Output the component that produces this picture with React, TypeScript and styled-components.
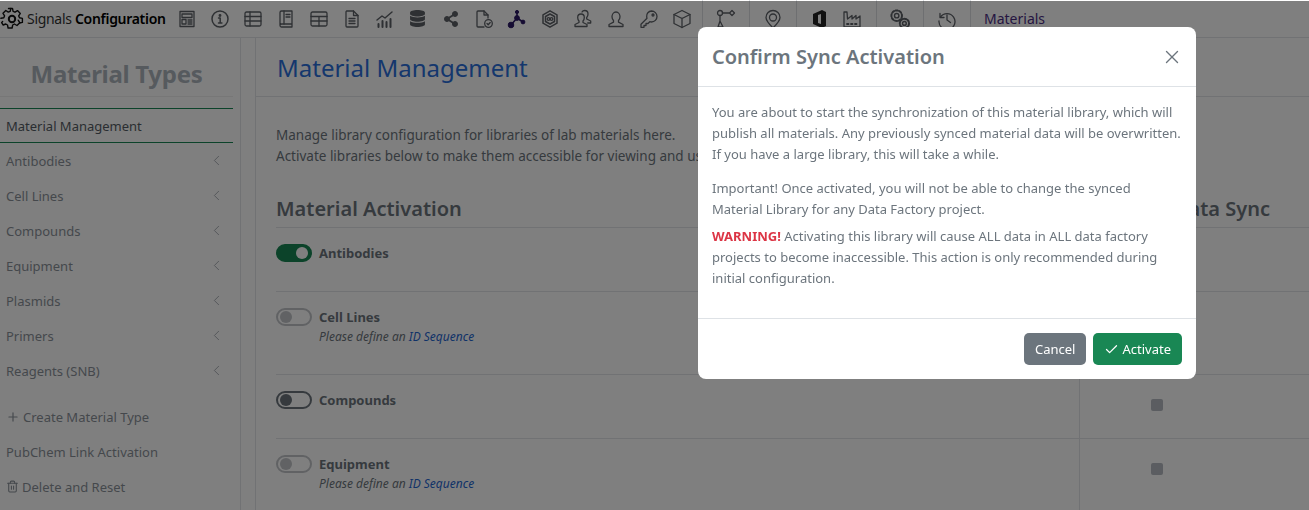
import { createGlobalStyle } from "styled-components";
import styled from "styled-components";
import { ReactNode } from "react";
import { FiChevronLeft, FiPlus, FiTrash2, FiCheck, FiX } from "react-icons/fi";
import { FaDatabase, FaShareAlt } from "react-icons/fa";

const GlobalStyle = createGlobalStyle`
  html, body {
    margin: 0;
    height: 510px;
    overflow: hidden;
    background: #fff;
    font-family: "Noto Sans", "Open Sans", sans-serif;
  }
  * { box-sizing: border-box; }
`;

const Page = styled.div`
  width: 1309px;
  height: 510px;
  display: flex;
  flex-direction: column;
  overflow: hidden;
`;

const TopBar = styled.div`
  height: 38px;
  flex: none;
  display: flex;
  align-items: center;
  border-bottom: 1px solid #e3e5e8;
`;

const Brand = styled.div`
  width: 170px;
  flex: none;
  display: flex;
  align-items: center;
  gap: 3px;
  font-size: 14px;
  letter-spacing: -0.3px;
  color: #333;
  b {
    color: #000;
    font-weight: 600;
  }
`;

const IconSlot = styled.div<{ $w?: number }>`
  width: ${(p) => p.$w ?? 33}px;
  flex: none;
  height: 24px;
  display: flex;
  align-items: center;
  justify-content: center;
  color: #5d6167;
`;

const Group = styled.div`
  height: 38px;
  flex: none;
  display: flex;
  align-items: center;
  justify-content: center;
  padding: 0 8px;
  border-left: 1px solid #dcdfe3;
`;

const BarLabel = styled.div`
  padding-left: 13px;
  height: 38px;
  display: flex;
  align-items: center;
  border-left: 1px solid #dcdfe3;
  font-size: 14px;
  color: #4b2d83;
`;

const Body = styled.div`
  flex: 1;
  display: flex;
  min-height: 0;
`;

const Sidebar = styled.aside`
  width: 241px;
  flex: none;
  border-right: 1px solid #e3e5e8;
  color: #6c757d;
`;

const SideTitle = styled.h2`
  margin: 0 7px 11px 0;
  height: 59px;
  line-height: 71px;
  text-align: center;
  font-size: 24px;
  font-weight: 700;
  color: #adb5bd;
  letter-spacing: -0.3px;
  border-bottom: 1px solid #eee;
`;

const SideActive = styled.div`
  width: 233px;
  height: 35px;
  padding-left: 6px;
  display: flex;
  align-items: center;
  font-size: 13px;
  color: #555c64;
  border-top: 1px solid #198754;
  border-bottom: 1px solid #198754;
`;

const SideItem = styled.div`
  width: 233px;
  height: 35px;
  padding: 0 8px 0 6px;
  display: flex;
  align-items: center;
  justify-content: space-between;
  font-size: 13px;
  color: #8a9199;
`;

const SideAction = styled(SideItem)`
  justify-content: flex-start;
  gap: 3px;
`;

const SideGap = styled.div`
  height: 11px;
`;

const Main = styled.main`
  flex: 1;
  margin-left: 14px;
  min-width: 0;
  border-left: 1px solid #e3e5e8;
  color: #6c757d;
`;

const MainTitle = styled.div`
  height: 59px;
  padding-left: 21px;
  line-height: 60px;
  font-size: 24px;
  color: #2a6fdb;
  border-bottom: 1px solid #e3e5e8;
`;

const Intro = styled.p`
  margin: 0;
  padding: 28px 0 0 20px;
  height: 93px;
  font-size: 13.5px;
  line-height: 21px;
  color: #6c757d;
  white-space: nowrap;
`;

const HeadRow = styled.div`
  margin-left: 20px;
  height: 38px;
  padding-right: 39px;
  display: flex;
  justify-content: space-between;
  align-items: center;
  font-size: 20px;
  font-weight: 600;
  color: #6c757d;
  border-bottom: 1px solid #e3e5e8;
`;

const Row = styled.div<{ $h: number }>`
  margin-left: 20px;
  height: ${(p) => p.$h}px;
  display: grid;
  grid-template-columns: 803px 154px 1fr;
  border-bottom: 1px solid #e3e5e8;
`;

const NameCell = styled.div`
  display: flex;
  gap: 7px;
  padding-top: 16px;
`;

const SyncCell = styled.div`
  border-left: 1px solid #e3e5e8;
  display: flex;
  justify-content: center;
  padding-top: 24px;
`;

const SyncBox = styled.div`
  width: 12px;
  height: 12px;
  border-radius: 2px;
  background: #b6bac2;
`;

const Switch = styled.div<{ $mode: "on" | "off" | "disabled" }>`
  width: 36px;
  height: 18px;
  flex: none;
  border-radius: 9px;
  display: flex;
  align-items: center;
  padding: 0 2px;
  justify-content: ${(p) => (p.$mode === "on" ? "flex-end" : "flex-start")};
  background: ${(p) => (p.$mode === "on" ? "#198754" : "#fff")};
  border: 2px solid
    ${(p) =>
      p.$mode === "on" ? "#198754" : p.$mode === "off" ? "#6c757d" : "#c2c5c9"};
  opacity: 1;
  i {
    width: 12px;
    height: 12px;
    border-radius: 50%;
    background: ${(p) =>
      p.$mode === "on" ? "#fff" : p.$mode === "off" ? "#6c757d" : "#c2c5c9"};
  }
`;

const MatName = styled.div`
  font-size: 13px;
  line-height: 20px;
  font-weight: 700;
  color: #6c757d;
  margin-top: -1px;
`;

const MatNote = styled.div`
  font-size: 12px;
  line-height: 20px;
  font-style: italic;
  color: #6c757d;
  a {
    color: #1f66d1;
  }
`;

const Backdrop = styled.div`
  position: fixed;
  inset: 1px 0 0 0;
  background: rgba(0, 0, 0, 0.5);
`;

const Modal = styled.div`
  position: fixed;
  left: 698px;
  top: 27px;
  width: 498px;
  height: 352px;
  background: #fff;
  border-radius: 8px;
  display: flex;
  flex-direction: column;
`;

const ModalHead = styled.div`
  height: 60px;
  flex: none;
  padding: 0 13px 0 14px;
  display: flex;
  align-items: center;
  justify-content: space-between;
  border-bottom: 1px solid #dee2e6;
  color: #6c757d;
`;

const ModalTitle = styled.h5`
  margin: 0;
  font-size: 20px;
  font-weight: 600;
`;

const ModalBody = styled.div`
  flex: 1;
  padding: 15px 14px 0;
  font-size: 13px;
  line-height: 21px;
  color: #6c757d;
  p {
    margin: 0 0 13px;
  }
  p:last-child {
    margin: -7px 0 0;
  }
  b {
    color: #dc3545;
    font-weight: 700;
  }
`;

const ModalFoot = styled.div`
  height: 61px;
  flex: none;
  padding: 0 14px 0 0;
  display: flex;
  justify-content: flex-end;
  align-items: center;
  gap: 7px;
  border-top: 1px solid #dee2e6;
`;

const Button = styled.button<{ $color: string }>`
  height: 32px;
  padding: 0 11px;
  display: flex;
  align-items: center;
  gap: 3px;
  border: none;
  border-radius: 5px;
  font-family: inherit;
  font-size: 13px;
  color: #fff;
  background: ${(p) => p.$color};
`;

const stroke = {
  fill: "none",
  stroke: "currentColor",
  strokeWidth: 1.3,
  strokeLinecap: "round" as const,
  strokeLinejoin: "round" as const,
};

const Svg = ({ children, size = 20 }: { children: ReactNode; size?: number }) => (
  <svg width={size} height={size} viewBox="0 0 20 20" {...stroke}>
    {children}
  </svg>
);

const icons: ReactNode[] = [
  <Svg key="layout">
    <rect x="3" y="2.5" width="14" height="15" />
    <rect x="5" y="5" width="10" height="3.5" />
    <rect x="5" y="10.5" width="4" height="4.5" />
    <path d="M11 11h4M11 13h4M11 15h4" />
  </Svg>,
  <Svg key="info">
    <circle cx="10" cy="10" r="8" strokeWidth="1.5" />
    <circle cx="10" cy="6.5" r="0.8" fill="currentColor" />
    <path d="M8.5 9h1.7v5M8.5 14h3.4" strokeWidth="1.5" />
  </Svg>,
  <Svg key="table">
    <rect x="2" y="3" width="16" height="14" rx="1.5" />
    <path d="M2 7.5h16M2 12h16M7 3v14" />
  </Svg>,
  <Svg key="book">
    <path d="M4 16V3.5A1.5 1.5 0 0 1 5.5 2H16v13H5.5A1.5 1.5 0 0 0 4 16.5 1.5 1.5 0 0 0 5.5 18H16v-3" />
    <path d="M8 2v13M10 5.5h4M10 8h4" />
  </Svg>,
  <Svg key="table2">
    <rect x="2" y="3" width="16" height="14" rx="1.5" />
    <path d="M2 7.5h16M2 12h16M10 7.5V17" />
  </Svg>,
  <Svg key="doc">
    <path d="M4.5 2h7L16 6.5V17a1 1 0 0 1-1 1H5a1 1 0 0 1-1-1V3a1 1 0 0 1 .5-1z" />
    <path d="M11.5 2v4.5H16M7 9.5h6M7 12h6M7 14.5h6" />
  </Svg>,
  <Svg key="chart">
    <path d="M2 11l5-4 3 2 7-6" strokeWidth="1.5" />
    <path d="M3.5 18v-3M7.5 18v-6M11.5 18v-5M15.5 18v-8" strokeWidth="2" />
  </Svg>,
  <FaDatabase key="db" size={17} />,
  <FaShareAlt key="share" size={16} />,
  <Svg key="fcheck">
    <path d="M10 18H4a1 1 0 0 1-1-1V3a1 1 0 0 1 1-1h6l4 4v3" />
    <path d="M10 2v4h4" />
    <circle cx="14.5" cy="14.5" r="3.8" />
    <path d="M13 14.5l1.2 1.2 2-2.2" />
  </Svg>,
  <svg key="mol" width="20" height="20" viewBox="0 0 20 20" fill="#2c1a66" stroke="#2c1a66">
    <path d="M10 3v6M10 9L4 16M10 9l6 4" strokeWidth="1.6" />
    <circle cx="10" cy="3" r="1.6" />
    <circle cx="10" cy="9" r="2.4" />
    <circle cx="4" cy="16" r="2.8" />
    <circle cx="16" cy="13" r="1.9" />
  </svg>,
  <Svg key="hex">
    <path d="M10 1.8l7 4v8.4l-7 4-7-4V5.800z" strokeWidth="1.5" />
    <path d="M10 5l4.500 2.500v5L10 15l-4.500-2.500v-5z" strokeWidth="1.5" />
    <circle cx="8.500" cy="10" r="1.300" />
    <circle cx="11.500" cy="10" r="1.300" />
  </Svg>,
  <Svg key="users">
    <path d="M2 17.500v-2l4-2v-1.500c-1-1-1.300-2-1.300-3.500 0-2 1.300-3.500 3.300-3.500s3.300 1.500 3.300 3.500c0 1.500-.3 2.500-1.300 3.500v1.500l4 2v2z" />
    <path d="M9 3c.5-1 1.500-1.500 2.700-1.500 2 0 3.300 1.500 3.300 3.500 0 1.500-.3 2.500-1.300 3.500V10l4 2v2h-3" />
  </Svg>,
  <Svg key="user">
    <path d="M3 17.500v-2l4.500-2.300v-1.700c-1-1-1.500-2.200-1.500-3.800C6 5.500 7.500 3 10 3s4 2.500 4 4.700c0 1.600-.5 2.800-1.500 3.800v1.700l4.500 2.300v2z" />
  </Svg>,
  <Svg key="key">
    <path d="M12.500 2a5.500 5.500 0 0 1 0 11c-.6 0-1.200-.1-1.700-.3L9 14.500H7v2H5v1.800H2v-3l6-6c-.2-.5-.3-1.100-.3-1.700A5 5 0 0 1 12.500 2z" />
    <circle cx="14" cy="6" r="1" />
  </Svg>,
  <Svg key="cube">
    <path d="M10 1.500l8 4v9l-8 4-8-4v-9z" />
    <path d="M2 5.500l8 4 8-4M10 9.500v9" />
  </Svg>,
];

const materials = [
  "Material Management",
  "Antibodies",
  "Cell Lines",
  "Compounds",
  "Equipment",
  "Plasmids",
  "Primers",
  "Reagents (SNB)",
];

const Note = () => (
  <MatNote>
    Please define an <a>ID Sequence</a>
  </MatNote>
);

export default function App() {
  return (
    <Page>
      <GlobalStyle />
      <TopBar>
        <Brand>
          <svg width="24" height="24" viewBox="0 0 24 24" {...stroke} strokeWidth={1.4} color="#111">
            <path d="M10 2.500h4l.6 2.900 1.900.8 2.500-1.600 2.800 2.800-1.600 2.500.8 1.900 2.900.6v4l-2.900.6" transform="translate(-1.500 -1)" />
            <path d="M10 2l-.6 2.900-1.900.8L5 4.100 2.200 6.900l1.600 2.500-.8 1.900-2.900.6" transform="translate(.8 -.6)" />
            <path d="M2.600 14.500l-1 1.200L3.200 18l2.600-1 1.700 1 .6 3h4l.6-3 1.700-1 2.600 1.500 2.800-2.800-1.600-2.500" />
            <circle cx="12" cy="12" r="3.200" strokeWidth={2} />
          </svg>
          <span>
            Signals <b>Configuration</b>
          </span>
        </Brand>
        {icons.map((icon, i) => (
          <IconSlot key={i}>{icon}</IconSlot>
        ))}
        <IconSlot $w={4} />
        <Group>
          <IconSlot $w={30}>
            <Svg>
              <circle cx="4" cy="4" r="2.500" />
              <path d="M16 1.500l2.500 2.500-2.500 2.500L13.500 4zM6.500 4h7M4 6.500V12M2 18l2-6 3 6z" />
            </Svg>
          </IconSlot>
        </Group>
        <Group>
          <IconSlot $w={30}>
            <Svg>
              <path d="M10 19c-4-4-7-7-7-10.500a7 7 0 0 1 14 0C17 12 14 15 10 19z" />
              <circle cx="10" cy="8.500" r="3.500" />
            </Svg>
          </IconSlot>
        </Group>
        <Group>
          <IconSlot $w={30}>
            <svg width="20" height="20" viewBox="0 0 20 20" fill="#222">
              <path d="M3 5l9-4 4 2v14l-4 2-9-4zM8 6v8l3 1V5z" />
            </svg>
          </IconSlot>
          <IconSlot $w={33}>
            <Svg>
              <path d="M2 18V3h3l.5 7 4.500-3.500V10l4-3.500V10l4-3v11z" />
              <path d="M5 15h1.500M9 15h1.500M13 15h1.500" strokeWidth="1.800" />
            </Svg>
          </IconSlot>
        </Group>
        <Group>
          <IconSlot $w={30}>
            <Svg size={22}>
              <circle cx="7" cy="7" r="2" />
              <circle cx="7" cy="7" r="4.800" strokeDasharray="2 1.500" strokeWidth="1.800" />
              <circle cx="14" cy="14" r="1.700" />
              <circle cx="14" cy="14" r="4.200" strokeDasharray="2 1.200" strokeWidth="1.800" />
            </Svg>
          </IconSlot>
        </Group>
        <Group>
          <IconSlot $w={30}>
            <Svg>
              <path d="M3 4.500v4h4" />
              <path d="M3.500 8A8 8 0 1 1 2 12" />
              <path d="M10 6v5l3.500 2.500" />
            </Svg>
          </IconSlot>
        </Group>
        <BarLabel>Materials</BarLabel>
      </TopBar>
      <Body>
        <Sidebar>
          <SideTitle>Material Types</SideTitle>
          <SideActive>{materials[0]}</SideActive>
          {materials.slice(1).map((name) => (
            <SideItem key={name}>
              {name}
              <FiChevronLeft size={17} strokeWidth={1} />
            </SideItem>
          ))}
          <SideGap />
          <SideAction>
            <FiPlus size={14} />
            Create Material Type
          </SideAction>
          <SideAction>PubChem Link Activation</SideAction>
          <SideAction>
            <FiTrash2 size={13} />
            Delete and Reset
          </SideAction>
        </Sidebar>
        <Main>
          <MainTitle>Material Management</MainTitle>
          <Intro>
            Manage library configuration for libraries of lab materials here.
            <br />
            Activate libraries below to make them accessible for viewing and usage.
          </Intro>
          <HeadRow>
            <span>Material Activation</span>
            <span>Data Sync</span>
          </HeadRow>
          <Row $h={64}>
            <NameCell>
              <Switch $mode="on">
                <i />
              </Switch>
              <MatName>Antibodies</MatName>
            </NameCell>
            <SyncCell />
            <div />
          </Row>
          <Row $h={83}>
            <NameCell>
              <Switch $mode="disabled">
                <i />
              </Switch>
              <div>
                <MatName>Cell Lines</MatName>
                <Note />
              </div>
            </NameCell>
            <SyncCell />
            <div />
          </Row>
          <Row $h={64}>
            <NameCell>
              <Switch $mode="off">
                <i />
              </Switch>
              <MatName>Compounds</MatName>
            </NameCell>
            <SyncCell>
              <SyncBox />
            </SyncCell>
            <div />
          </Row>
          <Row $h={83}>
            <NameCell>
              <Switch $mode="disabled">
                <i />
              </Switch>
              <div>
                <MatName>Equipment</MatName>
                <Note />
              </div>
            </NameCell>
            <SyncCell>
              <SyncBox />
            </SyncCell>
            <div />
          </Row>
        </Main>
      </Body>
      <Backdrop />
      <Modal>
        <ModalHead>
          <ModalTitle>Confirm Sync Activation</ModalTitle>
          <FiX size={22} strokeWidth={1.5} color="#6c757d" />
        </ModalHead>
        <ModalBody>
          <p>
            You are about to start the synchronization of this material library, which will
            publish all materials. Any previously synced material data will be overwritten. If
            you have a large library, this will take a while.
          </p>
          <p>
            Important! Once activated, you will not be able to change the synced Material
            Library for any Data Factory project.
          </p>
          <p>
            <b>WARNING!</b> Activating this library will cause ALL data in ALL data factory
            projects to become inaccessible. This action is only recommended during initial
            configuration.
          </p>
        </ModalBody>
        <ModalFoot>
          <Button $color="#6c757d">Cancel</Button>
          <Button $color="#198754">
            <FiCheck size={15} />
            Activate
          </Button>
        </ModalFoot>
      </Modal>
    </Page>
  );
}
